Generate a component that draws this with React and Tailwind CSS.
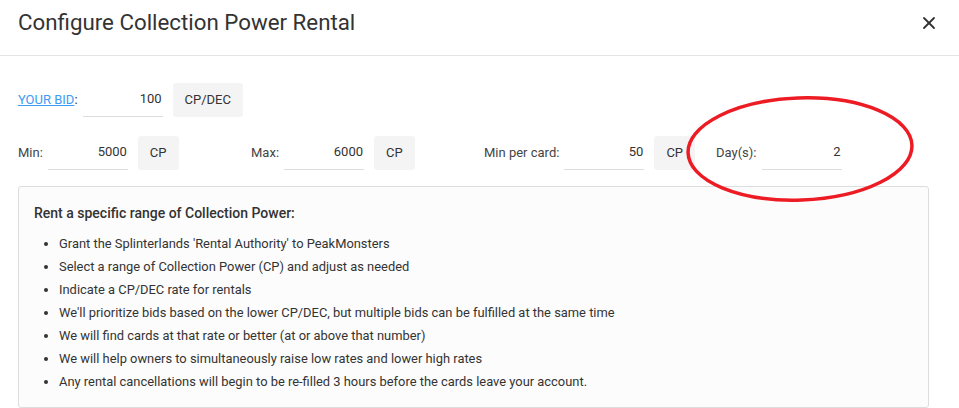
import { X } from "lucide-react";

const rules = [
    "Grant the Splinterlands 'Rental Authority' to PeakMonsters",
    "Select a range of Collection Power (CP) and adjust as needed",
    "Indicate a CP/DEC rate for rentals",
    "We'll prioritize bids based on the lower CP/DEC, but multiple bids can be fulfilled at the same time",
    "We will find cards at that rate or better (at or above that number)",
    "We will help owners to simultaneously raise low rates and lower high rates",
    "Any rental cancellations will begin to be re-filled 3 hours before the cards leave your account.",
];

function Field({ label, value, unit, link }) {
    return (
        <div className="flex items-center">
            {link ? (
                <span className="text-[13px] text-[#333]">
                    <a className="text-[#3c9bf4] underline">{label}</a>:
                </span>
            ) : (
                <span className="text-[13px] text-[#444]">{label}:</span>
            )}

            <div className="ml-[5px] flex h-[35px] w-[80px] items-center justify-end border-b border-[#ddd] pr-[1px] text-[13px] text-[#333]">
                {value}
            </div>

            {unit && (
                <div className="ml-[10px] flex h-[34px] items-center rounded-[3px] bg-[#f4f4f4] px-[12px] text-[13px] text-[#333]">
                    {unit}
                </div>
            )}
        </div>
    );
}

export default function App() {
    return (
        <div className="relative h-[408px] w-[959px] overflow-hidden bg-white font-['Roboto',sans-serif]">
            <div className="flex h-[56px] items-center justify-between border-b border-[#e5e5e5] pb-[10px] pl-[18px] pr-[20px]">
                <h1 className="text-[22.3px] text-[#333]">
                    Configure Collection Power Rental
                </h1>

                <X size={20} strokeWidth={2.2} className="text-[#333]" />
            </div>

            <div className="pl-[18px] pr-[30px] pt-[26px]">
                <Field label="YOUR BID" value="100" unit="CP/DEC" link />

                <div className="mt-[18px] grid grid-cols-[233px_233px_232px_1fr]">
                    <Field label="Min" value="5000" unit="CP" />
                    <Field label="Max" value="6000" unit="CP" />
                    <Field label="Min per card" value="50" unit="CP" />
                    <Field label="Day(s)" value="2" />
                </div>

                <section className="mt-[16px] rounded-[3px] border border-[#ddd] bg-[#fcfcfc] px-[15px] pb-[14px] pt-[16px]">
                    <h2 className="text-[14px] font-medium text-[#333]">
                        Rent a specific range of Collection Power:
                    </h2>

                    <ul className="mt-[8px] list-disc pl-[25px] text-[12.9px] leading-[23px] text-[#333]">
                        {rules.map((rule) => (
                            <li key={rule}>{rule}</li>
                        ))}
                    </ul>
                </section>
            </div>

            {/* red highlight ellipse drawn over the page */}
            <svg
                className="pointer-events-none absolute left-[684px] top-[93px]"
                width="236"
                height="112"
                viewBox="0 0 236 112"
            >
                <ellipse
                    cx="116"
                    cy="56"
                    rx="112"
                    ry="51"
                    fill="none"
                    stroke="#ed1c24"
                    strokeWidth="3.5"
                    transform="rotate(-2 116 56)"
                />
            </svg>
        </div>
    );
}
